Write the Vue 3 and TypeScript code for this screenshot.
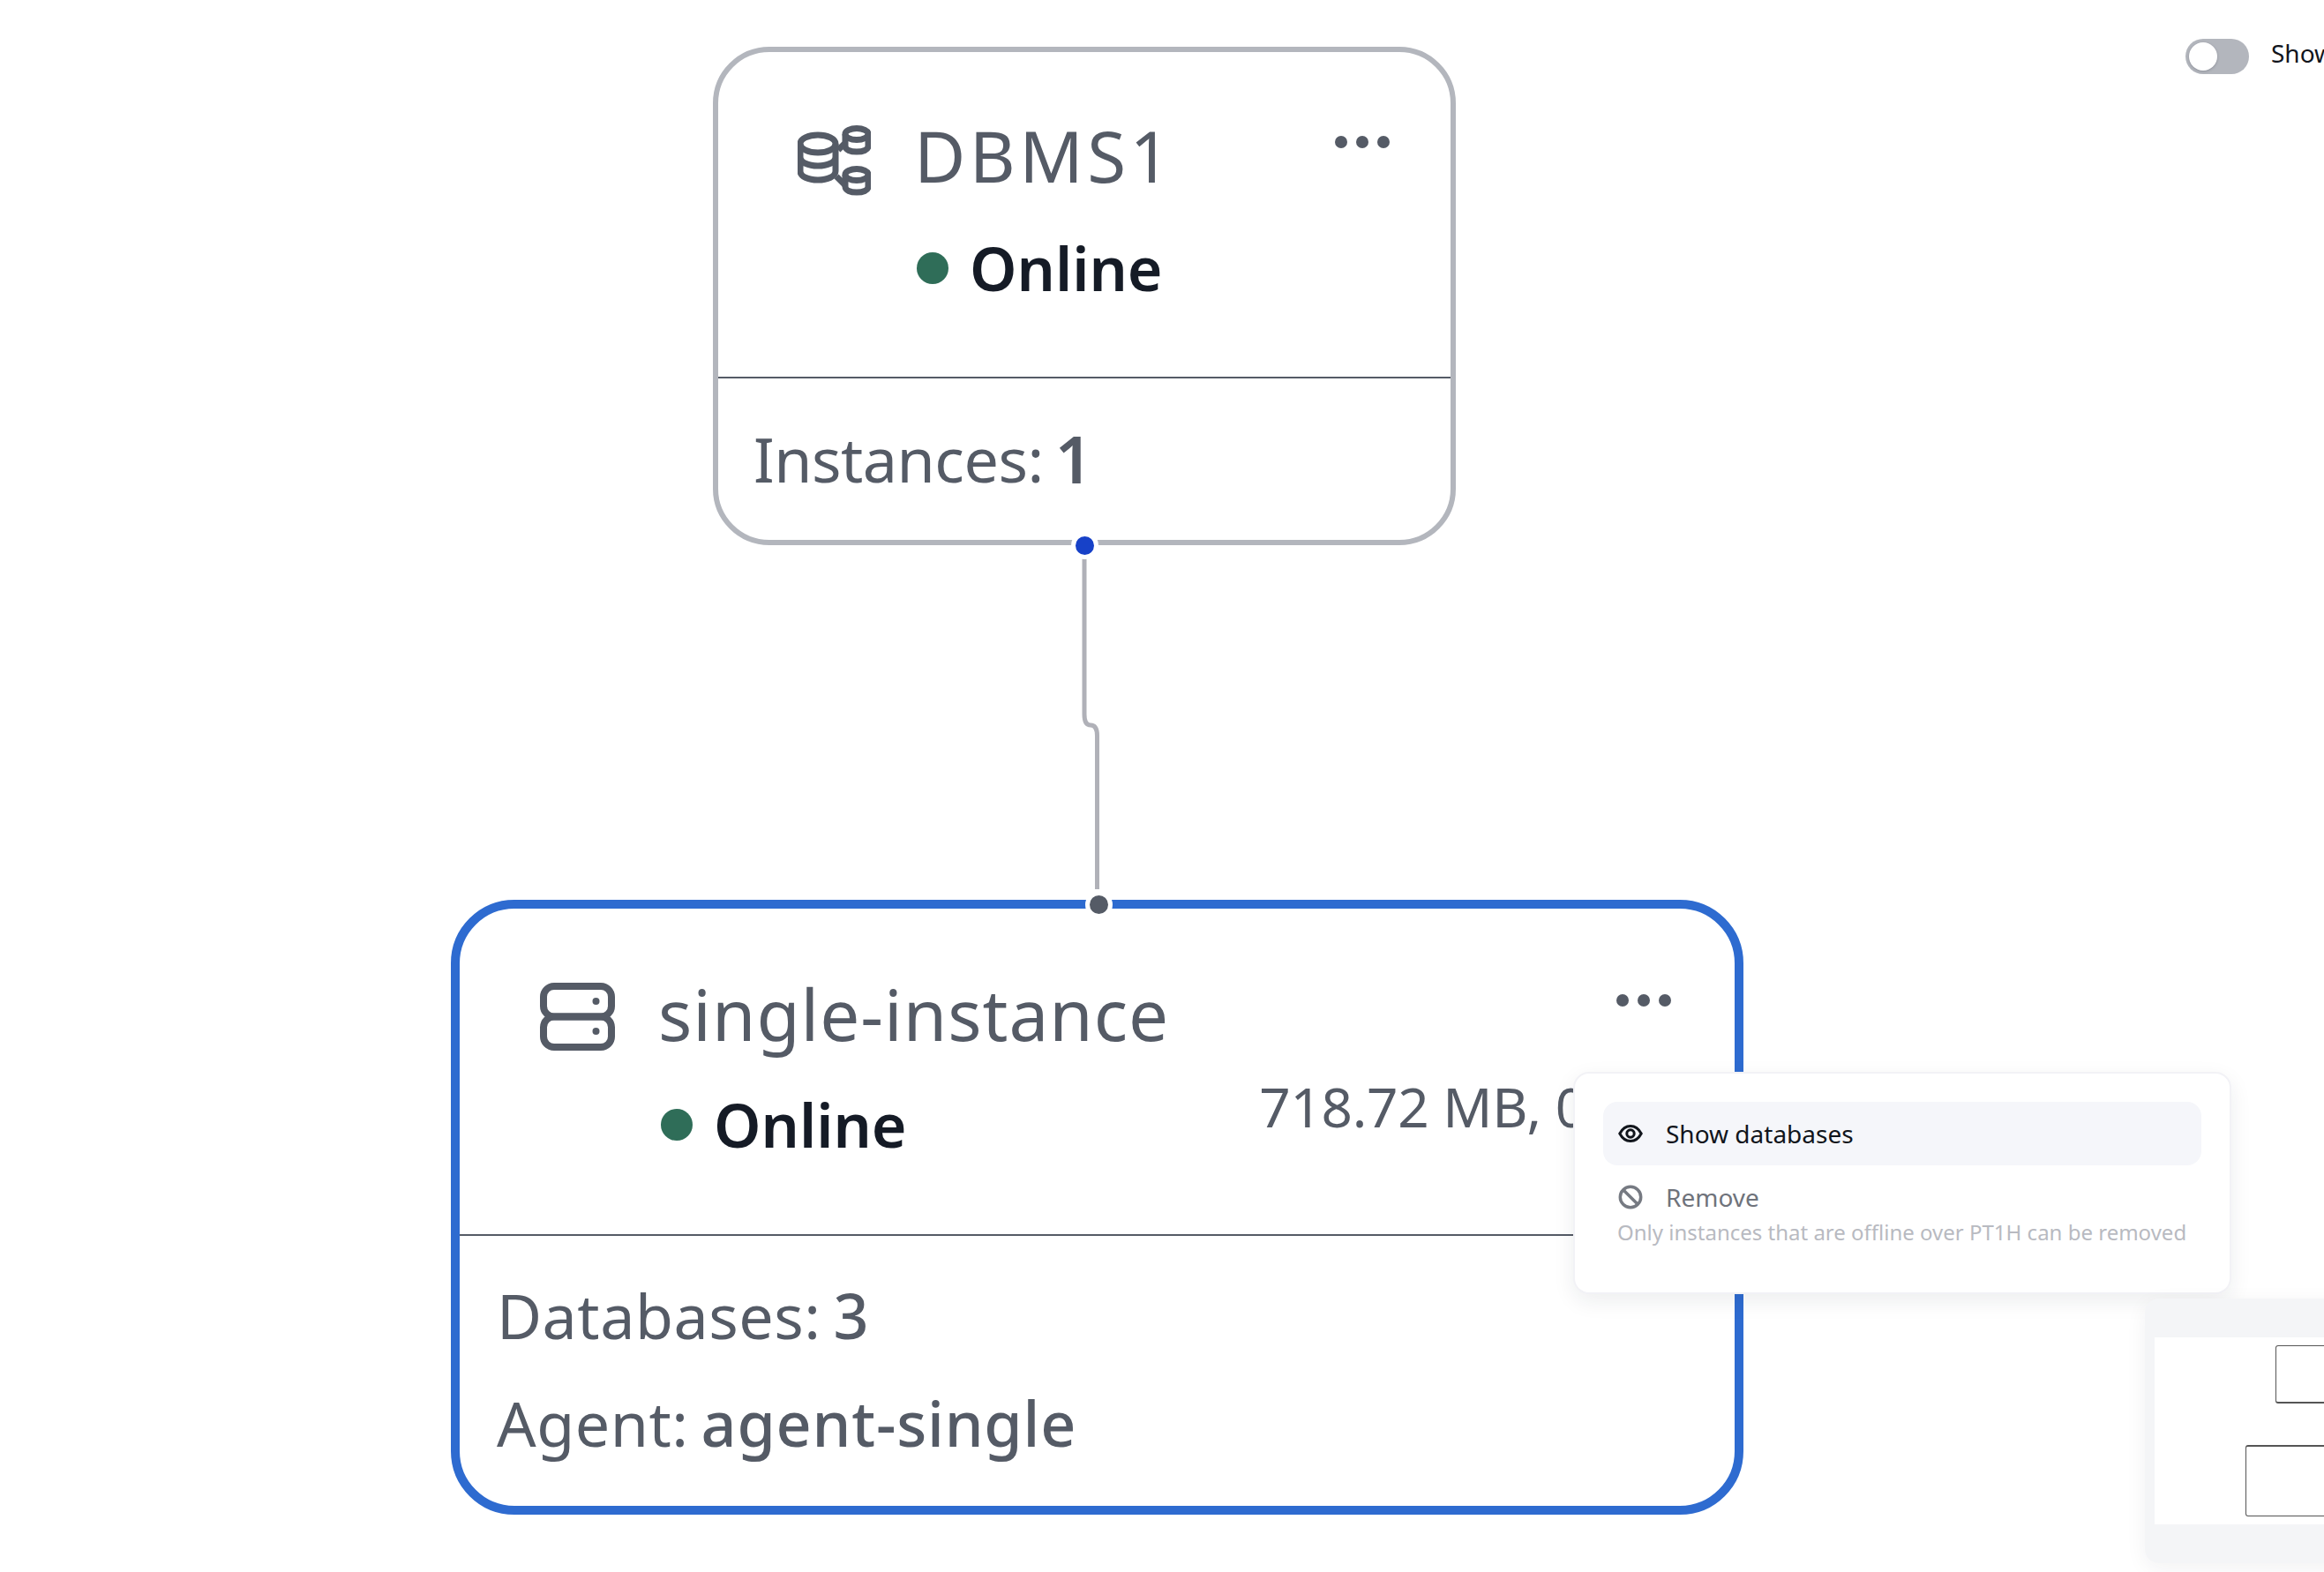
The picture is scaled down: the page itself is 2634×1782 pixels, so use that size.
<script setup lang="ts">
</script>

<template>
  <div class="canvas">
    <svg class="edges" width="2634" height="1782" viewBox="0 0 2634 1782" fill="none">
      <path d="M1229 633V810Q1229 822 1236 822Q1243.500 822 1243.500 834V1008" stroke="#b0b1b8" stroke-width="5" />
    </svg>

    <section class="node dbms">
      <div class="head">
        <svg class="icon-dbms" width="83" height="82" viewBox="0 0 83 82" fill="none" stroke="#555b66" stroke-width="7">
          <ellipse cx="23" cy="23" rx="20" ry="10" />
          <path d="M3 23V54C3 60 12 64 23 64S43 60 43 54V23M3 38C3 44 12 48 23 48S43 44 43 38" />
          <ellipse cx="67" cy="12" rx="13" ry="6.500" />
          <path d="M54 12V25.500C54 30 60 32 67 32S80 30 80 25.500V12" />
          <ellipse cx="67" cy="58" rx="13" ry="6.500" />
          <path d="M54 58V71.500C54 76 60 78 67 78S80 76 80 71.500V58" />
          <path d="M46 30L53 23M44 60L54 70" />
        </svg>
        <div class="titles">
          <div class="title">DBMS1</div>
          <div class="status"><span class="dot"></span>Online</div>
        </div>
        <div class="more"><i></i><i></i><i></i></div>
      </div>
      <div class="foot">
        <div class="stat">Instances:<b>1</b></div>
      </div>
      <span class="port port-out"></span>
    </section>

    <section class="node instance">
      <div class="head">
        <svg class="icon-server" width="85" height="77" viewBox="0 0 85 77" fill="none" stroke="#555b66" stroke-width="8">
          <rect x="4" y="4" width="77" height="34.500" rx="12" />
          <rect x="4" y="38.500" width="77" height="34.500" rx="12" />
          <circle cx="63.500" cy="21" r="4" fill="#555b66" stroke="none" />
          <circle cx="63.500" cy="55" r="4" fill="#555b66" stroke="none" />
        </svg>
        <div class="titles">
          <div class="title">single-instance</div>
          <div class="status"><span class="dot"></span>Online</div>
        </div>
        <div class="side">
          <div class="more"><i></i><i></i><i></i></div>
          <div class="usage">718.72 MB, 0</div>
        </div>
      </div>
      <div class="foot">
        <div class="stat">Databases:<b>3</b></div>
        <div class="stat">Agent:<b>agent-single</b></div>
      </div>
      <span class="port port-in"></span>
    </section>

    <div class="menu">
      <div class="menu-item active">
        <svg width="28" height="28" viewBox="0 0 28 28" fill="none" stroke="#11151c" stroke-width="3">
          <path d="M1.800 14C5 8 9 5.500 14 5.500S23 8 26.200 14C23 20 19 22.500 14 22.500S5 20 1.800 14Z" />
          <circle cx="14" cy="14" r="4.200" />
        </svg>
        <span>Show databases</span>
      </div>
      <div class="menu-item disabled">
        <svg width="28" height="28" viewBox="0 0 28 28" fill="none" stroke="#767a82" stroke-width="3.500">
          <circle cx="14" cy="14" r="11.700" />
          <path d="M5.700 5.700L22.300 22.300" />
        </svg>
        <span>Remove</span>
      </div>
      <div class="hint">Only instances that are offline over PT1H can be removed</div>
    </div>

    <div class="toggle-row">
      <span class="toggle"><span class="knob"></span></span>
      <span class="toggle-label">Show</span>
    </div>

    <div class="minimap">
      <div class="minimap-view">
        <span class="mini-node mini-a"></span>
        <span class="mini-node mini-b"></span>
      </div>
    </div>
  </div>
</template>

<style>
html, body { margin: 0; background: #fff; }
</style>

<style scoped>
.canvas {
  position: relative;
  width: 2634px;
  height: 1782px;
  overflow: hidden;
  background: #fff;
  font-family: "Noto Sans", "Open Sans", sans-serif;
  color: #555b66;
}
.edges { position: absolute; left: 0; top: 0; }
.node {
  position: absolute;
  box-sizing: border-box;
  display: flex;
  flex-direction: column;
  background: #fff;
}
.dbms {
  left: 808px; top: 53px; width: 842px; height: 565px;
  border: 6px solid #b3b6bd;
  border-radius: 64px;
}
.instance {
  left: 511px; top: 1020px; width: 1465px; height: 697px;
  border: 10px solid #2e6bd0;
  border-radius: 72px;
}
.head {
  display: flex;
  align-items: flex-start;
  border-bottom: 2px solid #555b66;
  box-sizing: border-box;
}
.dbms .head { height: 370px; padding: 81px 69px 0 90px; gap: 52px; }
.instance .head { height: 371px; padding: 84px 72px 0 91px; gap: 52px; }
.titles { display: flex; flex-direction: column; }
.title { font-size: 80px; line-height: 100px; font-weight: 400; margin-left: -3px; }
.dbms .title { letter-spacing: 4.400px; }
.instance .title { letter-spacing: 1px; }
.dbms .titles { margin-top: -14px; }
.instance .titles { margin-top: -15px; }
.status {
  display: flex;
  align-items: center;
  gap: 24px;
  font-size: 68px;
  line-height: 80px;
  font-weight: 600;
  color: #151b26;
}
.dbms .status { margin-top: 38px; }
.instance .status { margin-top: 36px; }
.dot { width: 36px; height: 36px; border-radius: 50%; background: #2f6d58; }
.more { display: flex; gap: 10px; margin-left: auto; }
.more i { width: 14px; height: 14px; border-radius: 50%; background: #555b66; }
.dbms .more { margin-top: 14px; }
.side { flex: 1; display: flex; flex-direction: column; min-width: 0; }
.side .more { margin-top: 13px; }
.usage {
  font-size: 62px;
  line-height: 80px;
  margin: 73px 0 0 50px;
  letter-spacing: -0.300px;
  white-space: nowrap;
}
.dbms .foot { padding: 46px 40px 0; }
.instance .foot { padding: 45px 42px 0; display: flex; flex-direction: column; gap: 32px; }
.stat { font-size: 70px; line-height: 90px; display: flex; }
.dbms .stat { letter-spacing: -0.500px; gap: 13px; }
.instance .stat { letter-spacing: 0.500px; gap: 14px; }
.stat b { font-weight: 500; }
.dbms .stat b { font-weight: 600; font-size: 74px; }
.instance .stat b { letter-spacing: 0.800px; }
.port {
  position: absolute;
  width: 21px; height: 21px;
  border-radius: 50%;
  border: 5px solid #fff;
}
.port-out { left: 399.500px; bottom: -21.500px; background: #1741c8; }
.port-in { left: 708.500px; top: -20.500px; background: #555b66; }
.menu {
  position: absolute;
  left: 1783px; top: 1215px;
  width: 746px; height: 252px;
  box-sizing: border-box;
  padding: 32px 32px 0;
  background: #fff;
  border: 2px solid #f2f2f6;
  border-radius: 18px;
  box-shadow: 0 8px 24px rgba(30, 35, 50, 0.08);
}
.menu-item {
  display: flex;
  align-items: center;
  gap: 26px;
  height: 72px;
  padding: 0 17px;
  border-radius: 16px;
  font-size: 28px;
  color: #11151c;
}
.menu-item.active { background: #f5f6fa; }
.menu-item.disabled { color: #6f737b; }
.hint {
  margin-top: -12px;
  padding-left: 16px;
  font-size: 24px;
  line-height: 32px;
  color: #b8bac1;
  white-space: nowrap;
}
.toggle-row {
  position: absolute;
  left: 2477px; top: 44px;
  display: flex;
  align-items: center;
  gap: 25px;
  white-space: nowrap;
}
.toggle {
  display: block;
  position: relative;
  width: 72px; height: 40px;
  border-radius: 20px;
  background: #b3b6bd;
}
.knob {
  position: absolute;
  left: 4px; top: 4px;
  width: 32px; height: 32px;
  border-radius: 50%;
  background: #fff;
  box-shadow: 0 1px 3px rgba(30, 35, 50, 0.25);
}
.toggle-label { font-size: 28px; line-height: 32px; color: #11151c; margin-bottom: 8px; }
.minimap {
  position: absolute;
  left: 2431px; top: 1472px;
  width: 240px; height: 300px;
  box-sizing: border-box;
  padding: 44px 0 44px 11px;
  background: #f4f5f7;
  border-radius: 16px;
  box-shadow: 0 6px 24px rgba(30, 35, 50, 0.06);
}
.minimap-view { position: relative; height: 100%; background: #fff; }
.mini-node {
  position: absolute;
  box-sizing: border-box;
  width: 200px;
  border: 1px solid #555;
  border-radius: 3px;
}
.mini-a { left: 137px; top: 9px; height: 66px; border-bottom-width: 2px; }
.mini-b { left: 103px; top: 122px; height: 81px; border-top-width: 2px; }
</style>
